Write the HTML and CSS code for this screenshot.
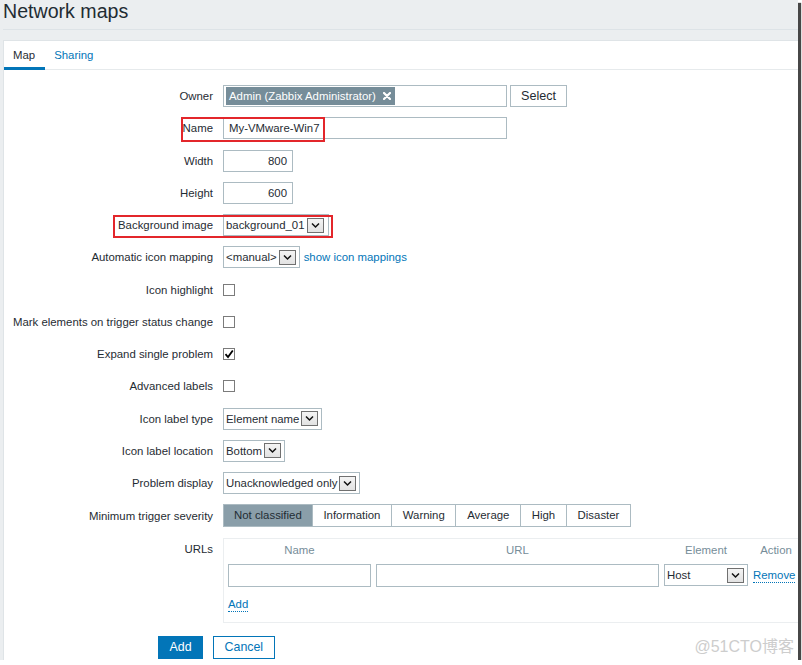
FILE: index.html
```html
<!DOCTYPE html>
<html lang="en">
<head>
<meta charset="utf-8">
<title>Network maps</title>
<link rel="stylesheet" href="styles.css">
</head>
<body>
<div class="shot">
  <header class="header"><h1 class="title">Network maps</h1></header>
  <main class="panel">
    <nav class="tabs">
      <span class="tab active">Map</span>
      <span class="tab link">Sharing</span>
    </nav>
    <form class="form">
      <div class="row">
        <label class="lbl">Owner</label>
        <div class="fld">
          <div class="multi">
            <span class="token">Admin (Zabbix Administrator)<svg class="tx" viewBox="0 0 8 8" width="8" height="8"><path d="M1 1L7 7M7 1L1 7" stroke="#fff" stroke-width="2.2" stroke-linecap="round"/></svg></span>
          </div>
          <button class="btn-alt" type="button">Select</button>
        </div>
      </div>
      <div class="row">
        <label class="lbl">Name</label>
        <div class="fld"><span class="inp w-wide">My-VMware-Win7</span></div>
        <span class="mark mark-name"></span>
      </div>
      <div class="row">
        <label class="lbl">Width</label>
        <div class="fld"><span class="inp w-num">800</span></div>
      </div>
      <div class="row">
        <label class="lbl">Height</label>
        <div class="fld"><span class="inp w-num">600</span></div>
      </div>
      <div class="row">
        <label class="lbl">Background image</label>
        <div class="fld"><span class="sel sel-bg">background_01<span class="arr"><svg viewBox="0 0 15 13" width="15" height="13"><polyline points="4,4.5 7.5,8 11,4.5" fill="none" stroke="#111" stroke-width="1.5"/></svg></span></span></div>
        <span class="mark mark-bg"></span>
      </div>
      <div class="row">
        <label class="lbl">Automatic icon mapping</label>
        <div class="fld"><span class="sel">&lt;manual&gt;<span class="arr"><svg viewBox="0 0 15 13" width="15" height="13"><polyline points="4,4.5 7.5,8 11,4.5" fill="none" stroke="#111" stroke-width="1.5"/></svg></span></span><a class="link lnk-gap">show icon mappings</a></div>
      </div>
      <div class="row">
        <label class="lbl">Icon highlight</label>
        <div class="fld"><span class="chk"></span></div>
      </div>
      <div class="row">
        <label class="lbl">Mark elements on trigger status change</label>
        <div class="fld"><span class="chk"></span></div>
      </div>
      <div class="row">
        <label class="lbl">Expand single problem</label>
        <div class="fld"><span class="chk"><svg viewBox="0 0 10 10" width="10" height="10"><path d="M1.5 5.2L4 8L8.8 1.5" fill="none" stroke="#000" stroke-width="1.8"/></svg></span></div>
      </div>
      <div class="row">
        <label class="lbl">Advanced labels</label>
        <div class="fld"><span class="chk"></span></div>
      </div>
      <div class="row">
        <label class="lbl">Icon label type</label>
        <div class="fld"><span class="sel">Element name<span class="arr"><svg viewBox="0 0 15 13" width="15" height="13"><polyline points="4,4.5 7.5,8 11,4.5" fill="none" stroke="#111" stroke-width="1.5"/></svg></span></span></div>
      </div>
      <div class="row">
        <label class="lbl">Icon label location</label>
        <div class="fld"><span class="sel">Bottom<span class="arr"><svg viewBox="0 0 15 13" width="15" height="13"><polyline points="4,4.5 7.5,8 11,4.5" fill="none" stroke="#111" stroke-width="1.5"/></svg></span></span></div>
      </div>
      <div class="row">
        <label class="lbl">Problem display</label>
        <div class="fld"><span class="sel">Unacknowledged only<span class="arr"><svg viewBox="0 0 15 13" width="15" height="13"><polyline points="4,4.5 7.5,8 11,4.5" fill="none" stroke="#111" stroke-width="1.5"/></svg></span></span></div>
      </div>
      <div class="row">
        <label class="lbl">Minimum trigger severity</label>
        <div class="fld">
          <div class="seg">
            <span class="opt on">Not classified</span>
            <span class="opt">Information</span>
            <span class="opt">Warning</span>
            <span class="opt">Average</span>
            <span class="opt">High</span>
            <span class="opt">Disaster</span>
          </div>
        </div>
      </div>
      <div class="row row-top">
        <label class="lbl lbl-top">URLs</label>
        <div class="fld">
          <div class="urls">
            <div class="ugrid">
              <span class="uh">Name</span>
              <span class="uh">URL</span>
              <span class="uh">Element</span>
              <span class="uh">Action</span>
              <span class="inp"></span>
              <span class="inp"></span>
              <span class="sel sel-el">Host<span class="arr"><svg viewBox="0 0 15 13" width="15" height="13"><polyline points="4,4.5 7.5,8 11,4.5" fill="none" stroke="#111" stroke-width="1.5"/></svg></span></span>
              <span class="act"><a class="link dotted">Remove</a></span>
            </div>
            <div class="uadd"><a class="link dotted">Add</a></div>
          </div>
        </div>
      </div>
      <div class="buttons">
        <button class="btn" type="button">Add</button>
        <button class="btn btn-out" type="button">Cancel</button>
      </div>
    </form>
  </main>
  <div class="watermark">@51CTO博客</div>
</div>
</body>
</html>
```

FILE: styles.css
```css
* { box-sizing: border-box; }
html, body { margin: 0; padding: 0; background: #fff; }
body {
  font-family: "Liberation Sans", Arial, sans-serif;
  font-size: 11.4px;
  line-height: 14px;
  color: #1f2c33;
}
.shot {
  position: relative;
  width: 798px;
  height: 660px;
  background: #ebeef0;
  overflow: hidden;
  display: flex;
  flex-direction: column;
  box-shadow: 3px 3px 1px rgba(0, 0, 0, 0.72);
}
.header {
  margin-left: 3px;
  height: 30px;
  border-bottom: 1px solid #dde3e7;
}
.title {
  margin: 0;
  font-size: 19.6px;
  line-height: 22px;
  font-weight: normal;
  color: #1f2c33;
}
.panel {
  flex: 1;
  margin: 10px 0 0 3px;
  background: #fff;
  border-top: 1px solid #dfe4e7;
  border-left: 1px solid #dfe4e7;
}
.tabs {
  display: flex;
  height: 29px;
  border-bottom: 1px solid #e6eaec;
}
.tab {
  padding: 0 10px 0 9px;
  line-height: 28px;
  height: 29px;
  margin-bottom: -1px;
}
.tab.active { box-shadow: inset 0 -3px 0 #0275b8; }
.link { color: #0275b8; text-decoration: none; }

.form {
  display: flex;
  flex-direction: column;
  gap: 10.25px;
  padding-top: 15px;
}
.row {
  position: relative;
  display: grid;
  grid-template-columns: 209px 1fr;
  column-gap: 10px;
  align-items: center;
  min-height: 22px;
}
.row-top { align-items: start; }
.lbl { text-align: right; white-space: nowrap; }
.lbl-top { padding-top: 4px; }
.fld { display: flex; align-items: center; min-width: 0; }

.inp {
  display: flex;
  align-items: center;
  height: 22px;
  border: 1px solid #acbbc2;
  padding: 0 5px;
  background: #fff;
}
.w-wide { width: 284px; }
.w-num { width: 70px; justify-content: flex-end; }

.multi {
  display: flex;
  align-items: center;
  width: 284px;
  height: 22px;
  border: 1px solid #acbbc2;
  padding: 0 2px;
}
.token {
  display: flex;
  align-items: center;
  height: 18px;
  padding: 0 4px 0 3px;
  background: #768d99;
  color: #fff;
}
.tx { margin-left: 7px; }
.btn-alt {
  margin-left: 3px;
  height: 22px;
  padding: 0 10px;
  border: 1px solid #acbbc2;
  background: #fff;
  color: #1f2c33;
  font: 12.6px/20px "Liberation Sans", Arial, sans-serif;
}

.sel {
  display: inline-flex;
  align-items: center;
  height: 22px;
  border: 1px solid #acbbc2;
  padding-left: 2px;
  background: #fff;
  white-space: nowrap;
}
.arr {
  display: flex;
  width: 17px;
  height: 15px;
  margin: 0 3px 0 2px;
  border: 1px solid #707070;
  background: linear-gradient(#f4f4f4, #e2e2e2);
}
.sel-bg .arr { margin-right: 4px; }
.sel-el { width: 84px; }
.sel-el .arr { margin-left: auto; }
.lnk-gap { margin-left: 4px; }

.chk {
  display: flex;
  align-items: center;
  justify-content: center;
  width: 12px;
  height: 12px;
  border: 1px solid #7b7b7b;
  background: #fff;
}

.seg {
  display: flex;
  height: 23px;
  border: 1px solid #acbbc2;
}
.opt {
  padding: 0 10.7px;
  line-height: 21px;
  border-left: 1px solid #acbbc2;
  white-space: nowrap;
}
.opt:first-child { border-left: 0; padding: 0 10px; }
.opt.on { background: #8a9ea9; }

.urls {
  width: 620px;
  border: 1px solid #ebeef0;
  padding: 3px 4px 10px;
}
.ugrid {
  display: grid;
  grid-template-columns: 143px 283px 84px 46px;
  column-gap: 5px;
  row-gap: 5px;
  align-items: center;
}
.uh {
  color: #768d99;
  text-align: center;
  line-height: 17px;
}
.ugrid .inp { height: 23px; }
.act { text-align: left; }
.dotted { border-bottom: 1px dotted #0275b8; padding-bottom: 1px; }
.uadd { margin-top: 9px; line-height: 16px; }

.buttons {
  display: flex;
  gap: 10px;
  margin: 3px 0 0 154px;
}
.btn {
  height: 23px;
  padding: 0 10.5px;
  border: 1px solid #0275b8;
  background: #0275b8;
  color: #fff;
  font: 12.4px/21px "Liberation Sans", Arial, sans-serif;
}
.btn-out { background: #fff; color: #0275b8; }

.mark {
  position: absolute;
  border: 2px solid #e3262b;
  pointer-events: none;
}
.mark-name { left: 177px; top: 0; width: 144px; height: 25px; }
.mark-bg { left: 109px; top: 1px; width: 220px; height: 23px; }

.watermark {
  position: absolute;
  right: 4px;
  bottom: 3px;
  font-family: "Liberation Sans", "Noto Sans CJK SC", sans-serif;
  font-size: 16px;
  line-height: 20px;
  color: #cdcdcd;
}
```
